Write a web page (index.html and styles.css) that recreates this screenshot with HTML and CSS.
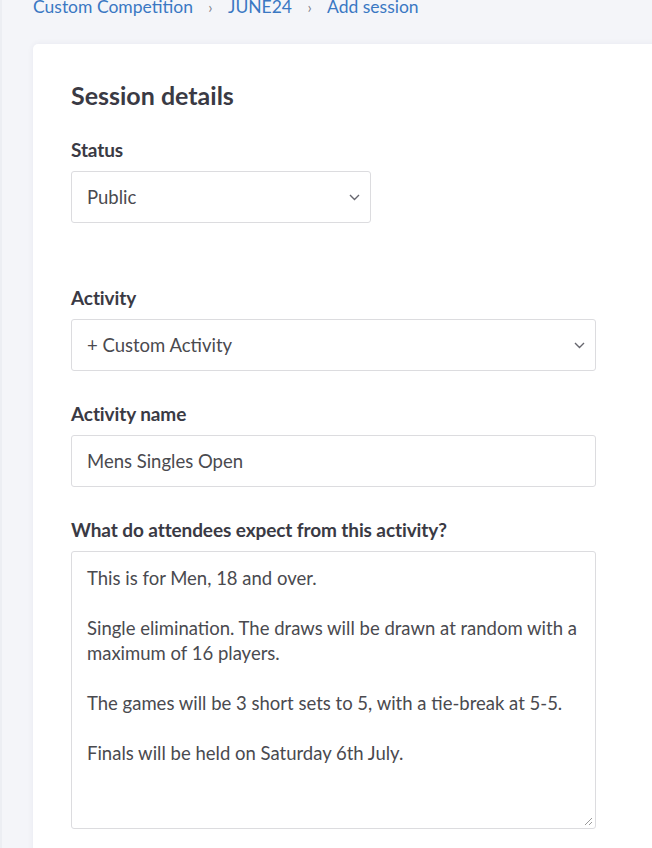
FILE: index.html
```html
<!DOCTYPE html>
<html lang="en">
<head>
  <meta charset="UTF-8">
  <meta name="viewport" content="width=device-width, initial-scale=1.0">
  <title>Add session</title>
  <link rel="stylesheet" href="styles.css">
</head>
<body>
  <div class="page">
    <nav class="crumbs">
      <a href="#">Custom Competition</a>
      <span class="sep">›</span>
      <a href="#">JUNE24</a>
      <span class="sep">›</span>
      <a href="#">Add session</a>
    </nav>

    <section class="card">
      <h1>Session details</h1>

      <div class="field">
        <label>Status</label>
        <div class="select short">
          <span>Public</span>
          <svg class="chev" width="11" height="7" viewBox="0 0 11 7"><path d="M1 1l4.5 4.5L10 1" fill="none" stroke="#66666e" stroke-width="1.4"/></svg>
        </div>
      </div>

      <div class="field gap">
        <label>Activity</label>
        <div class="select">
          <span>+ Custom Activity</span>
          <svg class="chev" width="11" height="7" viewBox="0 0 11 7"><path d="M1 1l4.5 4.5L10 1" fill="none" stroke="#66666e" stroke-width="1.4"/></svg>
        </div>
      </div>

      <div class="field">
        <label>Activity name</label>
        <div class="input">Mens Singles Open</div>
      </div>

      <div class="field">
        <label>What do attendees expect from this activity?</label>
        <div class="textarea">
          <p>This is for Men, 18 and over.</p>
          <p>Single elimination. The draws will be drawn at random with a maximum of 16 players.</p>
          <p>The games will be 3 short sets to 5, with a tie-break at 5-5.</p>
          <p>Finals will be held on Saturday 6th July.</p>
          <svg class="grip" width="10" height="10" viewBox="0 0 10 10"><path d="M9 2L2 9M9 6L6 9" stroke="#9a9a9a" stroke-width="1" fill="none"/></svg>
        </div>
      </div>
    </section>
  </div>
</body>
</html>
```

FILE: styles.css
```css
:root{
  --bg:#f4f5f9;
  --fg:#3a3a44;
  --text:#4a4a4f;
  --link:#3a78c3;
  --border:#dcdcdf;
}
*{box-sizing:border-box;margin:0}
body{
  font-family:Lato,"Open Sans",sans-serif;
  background:var(--bg);color:var(--fg);
  border-left:2px solid #eceef3;
  min-height:100vh;overflow:hidden;
}
.page{padding-left:31px}
.crumbs{display:flex;font-size:17.5px;line-height:24px;margin-top:-5px;height:49px}
.crumbs a{color:var(--link);text-decoration:none}
.crumbs .sep{color:#80808a;font-size:15px;width:35px;text-align:center}
.card{
  background:#fff;border-radius:5px;
  box-shadow:0 0 6px rgba(30,40,80,.06);
  width:640px;padding:36px 38px 40px;
}
h1{font-size:25px;font-weight:700;line-height:30px;margin-bottom:29px;color:var(--fg)}
.field{margin-bottom:32px;width:525px}
.field.gap{margin-top:64px}
label{display:block;font-size:19px;font-weight:700;line-height:22px;letter-spacing:-.1px;margin-bottom:10px;color:var(--fg)}
.select,.input,.textarea{
  border:1px solid var(--border);border-radius:3px;background:#fff;
  font-size:18.5px;color:var(--text);
}
.select,.input{height:52px;display:flex;align-items:center;padding:0 15px}
.select{justify-content:space-between;padding-right:10px}
.select.short{width:300px}
.textarea{height:278px;padding:14px 15px;line-height:25px;position:relative}
.textarea p{margin-bottom:25px}
.grip{position:absolute;right:2px;bottom:2px}
```
